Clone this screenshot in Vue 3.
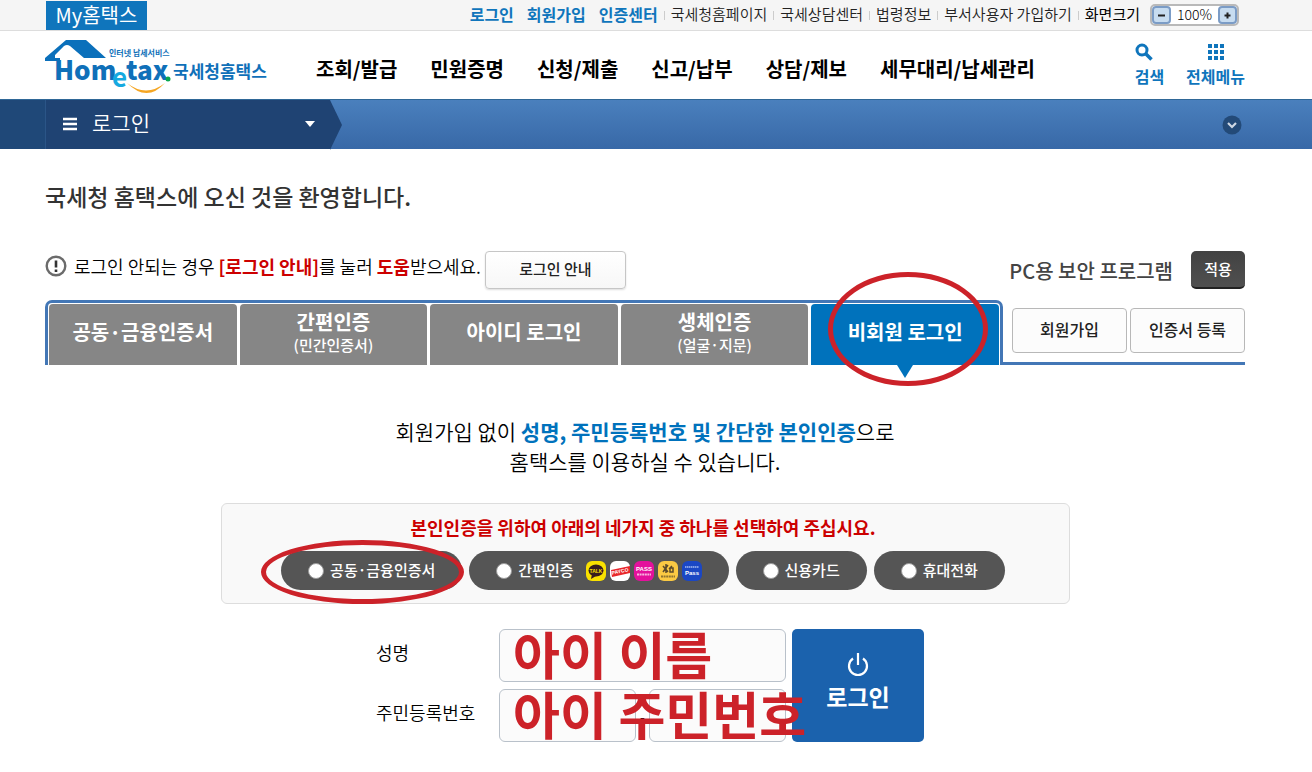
<script setup>
import { ref } from 'vue'

const memberLinks = ['로그인', '회원가입', '인증센터']
const siteLinks = ['국세청홈페이지', '국세상담센터', '법령정보', '부서사용자 가입하기']
const menus = ['조회/발급', '민원증명', '신청/제출', '신고/납부', '상담/제보', '세무대리/납세관리']

const tabs = [
  { id: 'cert', title: '공동·금융인증서' },
  { id: 'simple', title: '간편인증', sub: '(민간인증서)' },
  { id: 'id', title: '아이디 로그인' },
  { id: 'bio', title: '생체인증', sub: '(얼굴·지문)' },
  { id: 'guest', title: '비회원 로그인' },
]
const activeTab = ref('guest')

const methods = [
  { id: 'cert', label: '공동·금융인증서', marked: true },
  { id: 'simple', label: '간편인증', icons: true },
  { id: 'card', label: '신용카드' },
  { id: 'phone', label: '휴대전화' },
]
const method = ref('')

const zoom = ref(100)
const name = ref('')
const idFront = ref('')
const idBack = ref('')
</script>

<template>
  <div class="page">
    <div class="topbar">
      <a href="#" class="my-hometax">My홈택스</a>
      <div class="utility">
        <div class="member-links">
          <a v-for="link in memberLinks" :key="link" href="#">{{ link }}</a>
        </div>
        <div class="site-links">
          <a v-for="link in siteLinks" :key="link" href="#">{{ link }}</a>
          <span class="size-label">화면크기</span>
        </div>
        <div class="stepper">
          <button type="button" aria-label="축소" @click="zoom -= 10">
            <svg viewBox="0 0 9 9" width="9" height="9"><path d="M1 4.5h7" /></svg>
          </button>
          <span class="zoom-value">{{ zoom }}%</span>
          <button type="button" aria-label="확대" @click="zoom += 10">
            <svg viewBox="0 0 9 9" width="9" height="9"><path d="M1.500 4.500h6M4.500 1.500v6" /></svg>
          </button>
        </div>
      </div>
    </div>

    <header class="header">
      <a href="#" class="logo" aria-label="Hometax 국세청홈택스">
        <svg viewBox="0 0 225 54" width="225" height="54">
          <path d="M0 21V18L21 0h20l20 18H39L25 6q-3-2-6 0L10 15v3h5v3z" fill="#0b70bb" />
          <text x="64" y="16" class="logo-small">인터넷 납세서비스</text>
          <text x="9" y="40" class="logo-word">Hom</text>
          <text x="67" y="47" class="logo-e">e</text>
          <text x="81" y="40" class="logo-word">tax</text>
          <circle cx="123" cy="39" r="2.500" fill="#0aa84f" />
          <path d="M82 43q19 15 38 0q-18 20-38 0z" fill="#f5a623" />
          <text x="128" y="38" class="logo-name">국세청홈택스</text>
        </svg>
      </a>
      <nav class="menu">
        <a v-for="menu in menus" :key="menu" href="#">{{ menu }}</a>
      </nav>
      <div class="tools">
        <button type="button" class="search">
          <svg viewBox="0 0 18 18" width="18" height="18">
            <circle cx="7" cy="7" r="5" fill="none" stroke="#0f75bc" stroke-width="3" />
            <path d="M10.500 10.500l6 6" stroke="#0f75bc" stroke-width="3.500" />
          </svg>
          검색
        </button>
        <button type="button">
          <svg viewBox="0 0 18 18" width="18" height="18" fill="#0f75bc">
            <template v-for="row in 3" :key="row">
              <rect v-for="col in 3" :key="col" :x="col * 6 - 5" :y="row * 6 - 5" width="4" height="4" />
            </template>
          </svg>
          전체메뉴
        </button>
      </div>
    </header>

    <div class="crumb">
      <button type="button" class="crumb-menu">
        <svg viewBox="0 0 14 14" width="14" height="14"><path d="M0 2h14M0 7h14M0 12h14" stroke="#fff" stroke-width="2.500" /></svg>
        <span>로그인</span>
        <svg class="caret" viewBox="0 0 10 6" width="10" height="6"><path d="M0 0h10L5 6z" fill="#fff" /></svg>
      </button>
      <svg class="crumb-arrow" viewBox="0 0 13 50" width="13" height="50">
        <path d="M0 0l12 25L0 50z" fill="#1f4373" />
      </svg>
      <button type="button" class="crumb-toggle" aria-label="펼치기">
        <svg viewBox="0 0 20 20" width="20" height="20">
          <circle cx="10" cy="10" r="9.500" fill="#234a78" />
          <path d="M6 8l4 4 4-4" fill="none" stroke="#cfd8e4" stroke-width="2.200" />
        </svg>
      </button>
    </div>

    <main class="content">
      <h1>국세청 홈택스에 오신 것을 환영합니다.</h1>

      <div class="notice">
        <svg viewBox="0 0 22 22" width="22" height="22">
          <circle cx="11" cy="11" r="9.300" fill="none" stroke="#6b6b6b" stroke-width="2.400" />
          <path d="M11 5.500v7M11 14.500v2.500" stroke="#333" stroke-width="2.600" />
        </svg>
        <p>로그인 안되는 경우 <strong>[로그인 안내]</strong>를 눌러 <strong>도움</strong>받으세요.</p>
        <button type="button" class="guide">로그인 안내</button>
        <span class="security">PC용 보안 프로그램</span>
        <button type="button" class="apply">적용</button>
      </div>

      <div class="tab-row">
        <div class="tabs" role="tablist">
          <button
            v-for="tab in tabs"
            :key="tab.id"
            type="button"
            role="tab"
            class="tab"
            :class="{ active: activeTab === tab.id }"
            :aria-selected="activeTab === tab.id"
            @click="activeTab = tab.id"
          >
            <span>{{ tab.title }}</span>
            <small v-if="tab.sub">{{ tab.sub }}</small>
            <i v-if="tab.id === 'guest'" class="ring ring-tab"></i>
          </button>
        </div>
        <div class="side-buttons">
          <button type="button">회원가입</button>
          <button type="button">인증서 등록</button>
        </div>
      </div>

      <p class="intro">
        회원가입 없이 <strong>성명, 주민등록번호 및 간단한 본인인증</strong>으로<br />
        홈택스를 이용하실 수 있습니다.
      </p>

      <section class="method-box">
        <h2>본인인증을 위하여 아래의 네가지 중 하나를 선택하여 주십시요.</h2>
        <div class="methods">
          <label v-for="item in methods" :key="item.id" class="method">
            <input v-model="method" type="radio" name="method" :value="item.id" />
            <span>{{ item.label }}</span>
            <span v-if="item.icons" class="providers">
              <svg viewBox="0 0 20 20" width="20" height="20">
                <rect width="20" height="20" rx="6" fill="#fae100" />
                <ellipse cx="10" cy="9.500" rx="7.500" ry="6" fill="#371d1e" />
                <path d="M6 13l-1 5 5-3z" fill="#371d1e" />
                <text x="10" y="12" font-size="5" fill="#fae100">TALK</text>
              </svg>
              <svg viewBox="0 0 20 20" width="20" height="20">
                <rect width="20" height="20" rx="6" fill="#fff" />
                <path d="M1 9l19-4v7L2 16z" fill="#e8262b" />
                <text x="10" y="12" font-size="5" fill="#fff" transform="rotate(-12 10 10)">PAYCO</text>
              </svg>
              <svg viewBox="0 0 20 20" width="20" height="20">
                <rect width="20" height="20" rx="6" fill="#e4119c" />
                <text x="10" y="10" font-size="6" fill="#fff">PASS</text>
                <path d="M3 13.500h14" stroke="#f7b5df" stroke-width="2" stroke-dasharray="2 .6" />
              </svg>
              <svg viewBox="0 0 20 20" width="20" height="20">
                <rect width="20" height="20" rx="6" fill="#fbc943" />
                <path d="M5 5l5 6M10 4L5 11M8 3v9M11 8l3-3M12 7v4h3V7z" fill="none" stroke="#5b4a2b" stroke-width="1.500" />
                <path d="M3 15.500h14" stroke="#8f7430" stroke-width="2" stroke-dasharray="2 .6" />
              </svg>
              <svg viewBox="0 0 20 20" width="20" height="20">
                <rect width="20" height="20" rx="6" fill="#1b47c4" />
                <path d="M3 6h14" stroke="#a9bdf0" stroke-width="1.500" stroke-dasharray="1.500 .5" />
                <text x="10" y="14" font-size="6" fill="#fff">Pass</text>
              </svg>
            </span>
            <i v-if="item.marked" class="ring ring-method"></i>
          </label>
        </div>
      </section>

      <form class="login-form" @submit.prevent>
        <label for="name">성명</label>
        <div class="field">
          <input id="name" v-model="name" type="text" />
          <span class="hint">아이 이름</span>
        </div>
        <label for="id-front">주민등록번호</label>
        <div class="field">
          <input id="id-front" v-model="idFront" type="text" />
          <span class="dash">-</span>
          <input v-model="idBack" type="password" aria-label="주민등록번호 뒷자리" />
          <span class="hint">아이 주민번호</span>
        </div>
        <button type="submit" class="submit">
          <svg viewBox="0 0 22 24" width="22" height="24" fill="none" stroke="#fff" stroke-width="2.200">
            <path d="M6 5.500a9 9 0 1 0 10 0M11 0v12" />
          </svg>
          로그인
        </button>
      </form>
    </main>
  </div>
</template>

<style>
body {
  margin: 0;
  background: #fff;
}
</style>

<style scoped>
.page {
  font-family: 'Noto Sans CJK KR', sans-serif;
  color: #000;
  overflow: hidden;
}

.page * {
  box-sizing: border-box;
}

a {
  color: inherit;
  text-decoration: none;
}

button {
  padding: 0;
  border: none;
  background: none;
  font-family: inherit;
  cursor: pointer;
}

svg {
  display: block;
  flex-shrink: 0;
}

/* top bar */
.topbar {
  display: flex;
  justify-content: space-between;
  align-items: center;
  height: 31px;
  padding: 0 73px 0 46px;
  background: #f5f5f5;
  border-bottom: 1px solid #ddd;
  white-space: nowrap;
}

.my-hometax {
  width: 101px;
  height: 29px;
  background: #0f75bc;
  color: #fff;
  font-size: 20px;
  line-height: 28px;
  text-align: center;
}

.utility {
  display: flex;
  align-items: center;
}

.member-links {
  display: flex;
  gap: 13px;
  padding-bottom: 2px;
  color: #0f75bc;
  font-size: 16px;
  font-weight: 700;
  line-height: 26px;
}

.site-links {
  display: flex;
  align-items: center;
  padding-bottom: 2px;
  font-size: 15px;
  font-weight: 350;
  line-height: 26px;
  color: #222;
}

.site-links > *::before {
  content: '';
  display: inline-block;
  width: 1px;
  height: 9px;
  margin: 0 6px;
  background: #ccc;
}

.size-label {
  color: #000;
  font-weight: 400;
}

.stepper {
  display: flex;
  align-items: center;
  justify-content: space-between;
  width: 89px;
  height: 22px;
  margin-left: 10px;
  border: 2px solid #b9b9b9;
  border-radius: 5px;
  background: #fff;
}

.stepper button {
  display: flex;
  align-items: center;
  justify-content: center;
  width: 19px;
  height: 18px;
  border: 2px solid #7b9cc6;
  border-radius: 4px;
  background: #c7dcf0;
}

.stepper path {
  stroke: #222;
  stroke-width: 2;
}

.zoom-value {
  padding-bottom: 2px;
  font-size: 14px;
  font-weight: 300;
  line-height: 16px;
}

/* header */
.header {
  display: flex;
  align-items: center;
  height: 68px;
  padding: 0 67px 0 45px;
  white-space: nowrap;
}

.logo {
  padding-top: 3px;
}

.logo-word,
.logo-e,
.logo-small,
.logo-name {
  fill: #0f70b9;
  font-weight: 700;
}

.logo-word {
  font-size: 26px;
  font-weight: 900;
}

.logo-e {
  fill: #15a9e0;
  font-size: 26px;
}

.logo-small {
  font-size: 8px;
}

.logo-name {
  font-size: 17px;
}

.menu {
  display: flex;
  gap: 33px;
  margin-left: 46px;
  padding-top: 8px;
  color: #000;
  font-size: 20px;
  font-weight: 700;
  line-height: 30px;
}

.tools {
  display: flex;
  gap: 22px;
  margin-left: auto;
}

.tools button {
  display: flex;
  flex-direction: column;
  align-items: center;
  gap: 4px;
  color: #0f75bc;
  font-size: 16px;
  font-weight: 700;
  line-height: 22px;
}

.tools .search svg {
  align-self: flex-start;
}

/* breadcrumb strip */
.crumb {
  display: flex;
  align-items: center;
  height: 50px;
  padding-right: 70px;
  border-top: 1px solid #2f6797;
  background: linear-gradient(#4a80bd, #3868a7);
}

.crumb-menu {
  display: flex;
  align-items: center;
  width: 330px;
  height: 100%;
  padding: 0 15px 2px 63px;
  background: linear-gradient(90deg, #1f4878 45px, #2b5587 45px, #2b5587 46px, #1f4373 46px);
  color: #fff;
  font-size: 21px;
  font-weight: 350;
  line-height: 26px;
}

.crumb-menu span {
  margin-left: 15px;
  padding-bottom: 4px;
}

.caret {
  margin-left: auto;
}

.crumb-toggle {
  margin-left: auto;
}

/* content */
.content {
  padding: 30px 67px 28px 45px;
}

h1 {
  margin: 0;
  color: #333;
  font-size: 23px;
  font-weight: 500;
  line-height: 34px;
}

.notice {
  display: flex;
  align-items: center;
  height: 38px;
  margin-top: 38px;
  white-space: nowrap;
}

.notice > svg {
  margin-bottom: 8px;
}

.notice p {
  margin: 0 4px 9px 7px;
  font-size: 18px;
  font-weight: 350;
  line-height: 28px;
}

.notice strong {
  color: #c00;
  font-weight: 700;
}

.guide {
  width: 141px;
  height: 38px;
  padding-bottom: 3px;
  border: 1px solid #c6c6c6;
  border-radius: 4px;
  background: linear-gradient(#fff, #f7f7f7);
  box-shadow: 0 1px 2px #ddd;
  color: #222;
  font-size: 15px;
  font-weight: 500;
}

.security {
  margin-left: auto;
  color: #444;
  font-size: 20px;
  font-weight: 500;
}

.apply {
  width: 54px;
  height: 38px;
  padding-bottom: 2px;
  margin-left: 18px;
  border-bottom: 2px solid #222;
  border-radius: 5px;
  background: linear-gradient(#424242, #505050);
  color: #fff;
  font-size: 15px;
  font-weight: 500;
}

/* tabs */
.tab-row {
  display: flex;
  height: 65px;
  margin-top: 11px;
}

.tabs {
  display: grid;
  grid-template-columns: repeat(5, 1fr);
  gap: 3px;
  flex: 1;
  padding: 1px 1px 0;
  border: 3px solid #4377b6;
  border-bottom: none;
  border-radius: 7px 7px 0 0;
}

.tab {
  position: relative;
  display: flex;
  flex-direction: column;
  align-items: center;
  justify-content: center;
  padding-bottom: 5px;
  border-radius: 4px 4px 0 0;
  background: #868686;
  color: #fff;
  font-size: 20px;
  font-weight: 700;
  line-height: 26px;
  white-space: nowrap;
}

.tab small {
  font-size: 15px;
  font-weight: 500;
  line-height: 20px;
}

.tab.active {
  background: #0072bc;
}

.tab.active::after {
  content: '';
  position: absolute;
  top: 100%;
  left: 50%;
  margin-left: -8px;
  border: 8px solid transparent;
  border-top: 13px solid #0072bc;
  border-bottom: none;
}

.side-buttons {
  display: flex;
  align-items: flex-start;
  gap: 3px;
  width: 242px;
  padding: 8px 0 0 9px;
  border-bottom: 3px solid #4377b6;
}

.side-buttons button {
  flex: 1;
  height: 45px;
  padding-bottom: 3px;
  border: 1px solid #b8b8b8;
  border-radius: 4px;
  background: #fcfcfc;
  color: #222;
  font-size: 16px;
  font-weight: 500;
}

/* red rings around the steps to follow */
.ring {
  position: absolute;
  z-index: 1;
  border: 5px solid #cc2229;
  border-radius: 50%;
  pointer-events: none;
}

.ring-tab {
  top: -32px;
  left: 17px;
  width: 160px;
  height: 114px;
}

.ring-method {
  top: -11px;
  left: -20px;
  width: 203px;
  height: 64px;
}

.intro {
  margin: 51px 0 0;
  font-size: 21px;
  font-weight: 350;
  line-height: 30px;
  text-align: center;
}

.intro strong {
  color: #0072bc;
  font-weight: 700;
}

/* verification methods */
.method-box {
  max-width: 849px;
  margin: 27px auto 0;
  padding: 11px 4px 13px 0;
  border: 1px solid #ddd;
  border-radius: 6px;
  background: #f9f9f9;
}

h2 {
  margin: 0 0 12px;
  color: #c00;
  font-size: 18px;
  font-weight: 700;
  line-height: 24px;
  text-align: center;
}

.methods {
  display: flex;
  justify-content: center;
  gap: 7px;
}

.method {
  position: relative;
  display: flex;
  align-items: center;
  height: 39px;
  padding: 0 27px;
  border-radius: 20px;
  background: #555;
  color: #fff;
  font-size: 15px;
  font-weight: 500;
  line-height: 20px;
  white-space: nowrap;
  cursor: pointer;
}

.method > span:not(.providers) {
  padding-bottom: 2px;
}

.method input {
  appearance: none;
  width: 16px;
  height: 16px;
  margin: 0 6px 0 0;
  border: 1px solid #999;
  border-radius: 50%;
  background: #fff;
}

.method input:checked {
  border: 5px solid #fff;
  background: #0072bc;
}

.providers {
  display: flex;
  gap: 4px;
  margin-left: 12px;
}

.providers text {
  font-family: 'Liberation Sans', sans-serif;
  font-weight: 700;
  text-anchor: middle;
}

/* login form */
.login-form {
  display: grid;
  grid-template-columns: 123px 287px 138px;
  grid-template-rows: 53px 53px;
  row-gap: 7px;
  justify-content: center;
  margin-top: 25px;
  padding-left: 10px;
}

.login-form label {
  align-self: center;
  padding-bottom: 7px;
  font-size: 18px;
  font-weight: 350;
  line-height: 26px;
}

.field {
  position: relative;
  display: flex;
  align-items: center;
}

.field input {
  flex: 1;
  min-width: 0;
  height: 53px;
  padding: 0 12px;
  border: 1px solid #b9c1ca;
  border-radius: 6px;
  background: #fbfbfb;
  font-family: inherit;
  font-size: 18px;
}

.dash {
  width: 13px;
  font-size: 14px;
  text-align: center;
}

.hint {
  position: absolute;
  top: 0;
  left: 14px;
  z-index: 1;
  color: #cc2229;
  font-size: 51px;
  font-weight: 700;
  line-height: 48px;
  white-space: nowrap;
  pointer-events: none;
}

.submit {
  grid-column: 3;
  grid-row: 1 / 3;
  display: flex;
  flex-direction: column;
  align-items: center;
  justify-content: center;
  gap: 3px;
  margin-left: 6px;
  padding-bottom: 6px;
  border-radius: 5px;
  background: #1b62ad;
  color: #fff;
  font-size: 23px;
  font-weight: 700;
  line-height: 32px;
}
</style>
